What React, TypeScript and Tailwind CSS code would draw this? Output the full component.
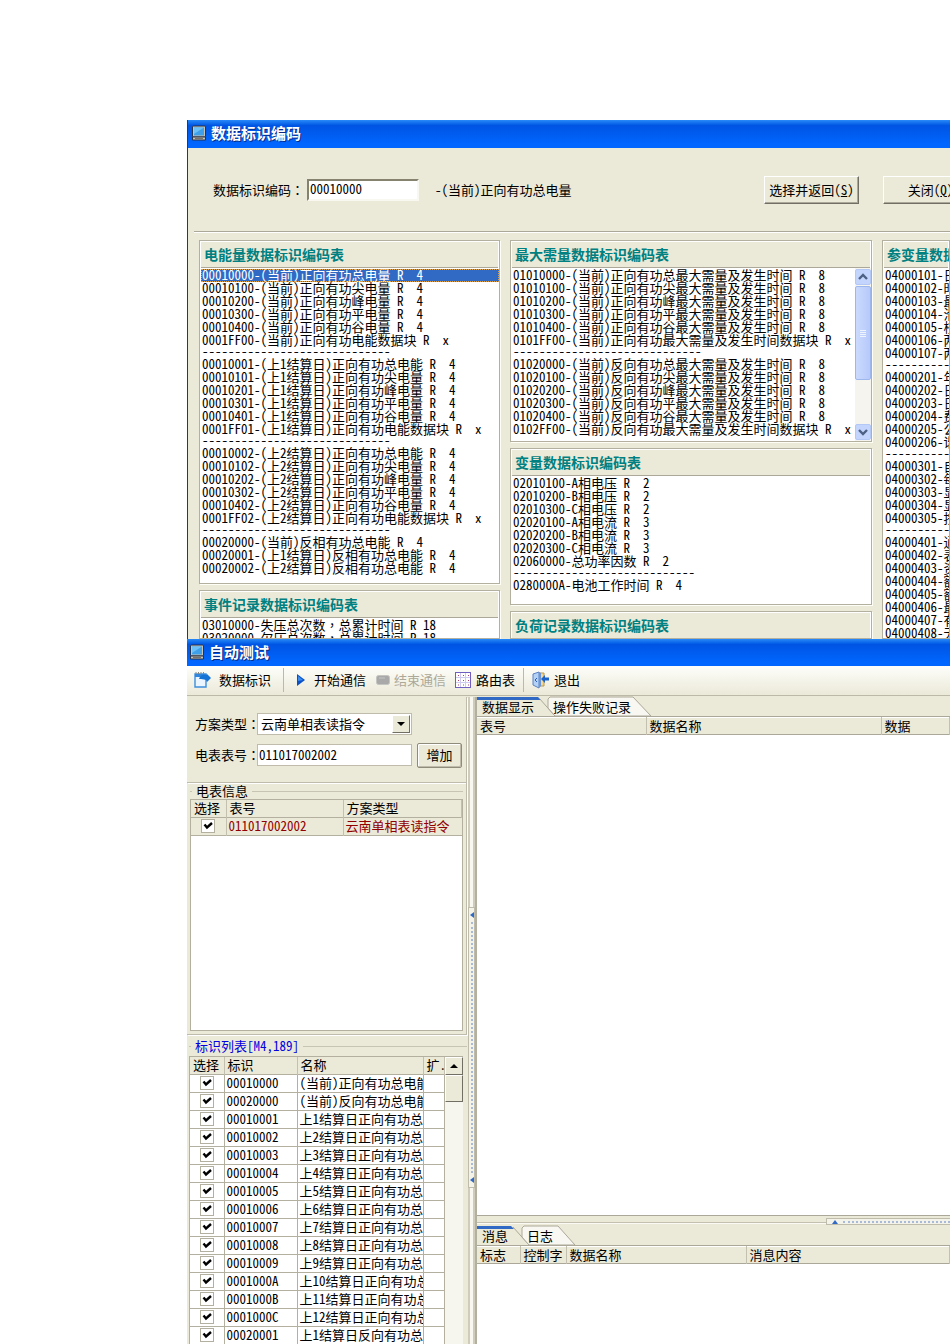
import type { ReactNode } from "react";

const energyCodes = [
  "00010000-(当前)正向有功总电量 R  4",
  "00010100-(当前)正向有功尖电量 R  4",
  "00010200-(当前)正向有功峰电量 R  4",
  "00010300-(当前)正向有功平电量 R  4",
  "00010400-(当前)正向有功谷电量 R  4",
  "0001FF00-(当前)正向有功电能数据块 R  x",
  "-----------------------------",
  "00010001-(上1结算日)正向有功总电能 R  4",
  "00010101-(上1结算日)正向有功尖电量 R  4",
  "00010201-(上1结算日)正向有功峰电量 R  4",
  "00010301-(上1结算日)正向有功平电量 R  4",
  "00010401-(上1结算日)正向有功谷电量 R  4",
  "0001FF01-(上1结算日)正向有功电能数据块 R  x",
  "-----------------------------",
  "00010002-(上2结算日)正向有功总电能 R  4",
  "00010102-(上2结算日)正向有功尖电量 R  4",
  "00010202-(上2结算日)正向有功峰电量 R  4",
  "00010302-(上2结算日)正向有功平电量 R  4",
  "00010402-(上2结算日)正向有功谷电量 R  4",
  "0001FF02-(上2结算日)正向有功电能数据块 R  x",
  "-----------------------------",
  "00020000-(当前)反相有功总电能 R  4",
  "00020001-(上1结算日)反相有功总电能 R  4",
  "00020002-(上2结算日)反相有功总电能 R  4",
];

const eventCodes = [
  "03010000-失压总次数，总累计时间 R 18",
  "03020000-欠压总次数，总累计时间 R 18",
];

const demandCodes = [
  "01010000-(当前)正向有功总最大需量及发生时间 R  8",
  "01010100-(当前)正向有功尖最大需量及发生时间 R  8",
  "01010200-(当前)正向有功峰最大需量及发生时间 R  8",
  "01010300-(当前)正向有功平最大需量及发生时间 R  8",
  "01010400-(当前)正向有功谷最大需量及发生时间 R  8",
  "0101FF00-(当前)正向有功最大需量及发生时间数据块 R  x",
  "-----------------------------",
  "01020000-(当前)反向有功总最大需量及发生时间 R  8",
  "01020100-(当前)反向有功尖最大需量及发生时间 R  8",
  "01020200-(当前)反向有功峰最大需量及发生时间 R  8",
  "01020300-(当前)反向有功平最大需量及发生时间 R  8",
  "01020400-(当前)反向有功谷最大需量及发生时间 R  8",
  "0102FF00-(当前)反向有功最大需量及发生时间数据块 R  x",
  "-----------------------------",
];

const variableCodes = [
  "02010100-A相电压 R  2",
  "02010200-B相电压 R  2",
  "02010300-C相电压 R  2",
  "02020100-A相电流 R  3",
  "02020200-B相电流 R  3",
  "02020300-C相电流 R  3",
  "02060000-总功率因数 R  2",
  "----------------------------",
  "0280000A-电池工作时间 R  4",
];

const paramCodes = [
  "04000101-日期",
  "04000102-时间",
  "04000103-最大",
  "04000104-滑差",
  "04000105-校表",
  "04000106-两套",
  "04000107-两套",
  "---------------",
  "04000201-年时",
  "04000202-日时",
  "04000203-日时",
  "04000204-费率",
  "04000205-公共",
  "04000206-谐波",
  "---------------",
  "04000301-自动",
  "04000302-每屏",
  "04000303-显示",
  "04000304-显示",
  "04000305-按键",
  "---------------",
  "04000401-通信",
  "04000402-表号",
  "04000403-资产",
  "04000404-额定",
  "04000405-额定",
  "04000406-最大",
  "04000407-有功",
  "04000408-无功",
];

const idRows = [
  ["00010000", "(当前)正向有功总电能"],
  ["00020000", "(当前)反向有功总电能"],
  ["00010001", "上1结算日正向有功总"],
  ["00010002", "上2结算日正向有功总"],
  ["00010003", "上3结算日正向有功总"],
  ["00010004", "上4结算日正向有功总"],
  ["00010005", "上5结算日正向有功总"],
  ["00010006", "上6结算日正向有功总"],
  ["00010007", "上7结算日正向有功总"],
  ["00010008", "上8结算日正向有功总"],
  ["00010009", "上9结算日正向有功总"],
  ["0001000A", "上10结算日正向有功总"],
  ["0001000B", "上11结算日正向有功总"],
  ["0001000C", "上12结算日正向有功总"],
  ["00020001", "上1结算日反向有功总"],
];

// full-width punctuation, centred in its cell
const Wide = ({ children }: { children: ReactNode }) => (
  <span lang="zh-TW" className="[font-feature-settings:normal]">
    {children}
  </span>
);

const MonitorIcon = () => (
  <svg className="h-4 w-4 shrink-0" viewBox="0 0 16 16">
    <rect x="1.500" y="1" width="13" height="11" rx="1" fill="#c8c4b4" stroke="#26334d" />
    <rect x="3" y="2.500" width="10" height="8" fill="#3f9fe8" />
    <path d="M3 2.500h10L3 9z" fill="#6cc0f8" />
    <path d="M1.500 12h13v3h-13z" fill="#c8c4b4" stroke="#26334d" />
    <path d="M4 13.500h8" stroke="#77736a" />
  </svg>
);

const TitleBar = ({ title, className }: { title: string; className: string }) => (
  <header
    className={`flex shrink-0 items-center gap-1 bg-linear-to-b from-[#2a8af8] from-0% via-[#0054e3] via-20% to-[#0066ff] to-85% pb-0.5 ${className}`}
  >
    <MonitorIcon />
    <h1 className="text-[15px] leading-5 font-bold whitespace-nowrap text-white [text-shadow:1px_1px_#0a2a80]">
      {title}
    </h1>
  </header>
);

type CodePanelProps = {
  title: string;
  codes?: string[];
  selected?: number;
  className?: string;
  children?: ReactNode;
};

const CodePanel = ({ title, codes = [], selected, className = "", children }: CodePanelProps) => (
  <section
    className={`flex flex-col overflow-hidden border border-[#b4b0a0] bg-white shadow-[1px_1px_#fffef6] ${className}`}
  >
    <h2 className="mx-px mt-px h-[26px] shrink-0 border-b border-[#aca899] bg-[#ebe9d8] pl-[3px] text-[14px] leading-6 font-bold whitespace-nowrap text-[#008080]">
      {title}
    </h2>
    <div className="flex min-h-0 flex-1">
      <ul className="min-w-0 flex-1 pt-px pl-px">
        {codes.map((code, i) => (
          <li
            key={i}
            className={`pl-px whitespace-pre ${
              code.startsWith("--") ? "h-[11px] leading-[7px]" : "h-[13px] leading-[11px]"
            } ${i === selected ? "bg-[#316ac5] text-white outline-1 -outline-offset-1 outline-dotted outline-[#d8a050]" : ""}`}
          >
            {code.split("，").map((part, j) => (
              <span key={j}>
                {j > 0 && <Wide>，</Wide>}
                {part}
              </span>
            ))}
          </li>
        ))}
      </ul>
      {children}
    </div>
  </section>
);

const ScrollArrow = ({ down = false }: { down?: boolean }) => (
  <button
    className="flex h-4 items-center justify-center rounded-xs border border-[#b4c8f6] bg-[#c4d5fd]"
    aria-label={down ? "向下滚动" : "向上滚动"}
  >
    <svg className="h-2 w-2.5" viewBox="0 0 10 8" fill="none" stroke="#4d6185" strokeWidth="2.4">
      <path d={down ? "M1 2l4 4 4-4" : "M1 6l4-4 4 4"} />
    </svg>
  </button>
);

const CodeScrollBar = () => (
  <div className="flex w-4 shrink-0 flex-col bg-[#f5f4ee] py-px">
    <ScrollArrow />
    <div className="mt-px flex h-[94px] flex-col items-center justify-center gap-px rounded-xs border border-[#9db6ec] bg-linear-to-r from-[#cbdafd] to-[#b6c9fa]">
      <i className="h-px w-1.5 bg-[#eef4fe]" />
      <i className="h-px w-1.5 bg-[#eef4fe]" />
      <i className="h-px w-1.5 bg-[#eef4fe]" />
      <i className="h-px w-1.5 bg-[#eef4fe]" />
    </div>
    <div className="flex-1" />
    <ScrollArrow down />
  </div>
);

const ClassicButton = ({ children }: { children: ReactNode }) => (
  <button className="h-7 w-[95px] shrink-0 border border-t-white border-r-[#716f64] border-b-[#716f64] border-l-white bg-[#ebe9d8] whitespace-nowrap shadow-[inset_-1px_-1px_#aca899]">
    {children}
  </button>
);

const CodeWindow = () => (
  <div className="flex h-[519px] shrink-0 flex-col overflow-hidden border-l border-[#0831d9] bg-[#ebe9d8]">
    <TitleBar title="数据标识编码" className="h-7 pl-[3px]" />
    <div className="ml-1.5 flex h-[84px] shrink-0 items-center border-b border-[#aca899] pl-[19px] shadow-[0_1px_#fff]">
      <label htmlFor="code" className="shrink-0">
        数据标识编码<Wide>：</Wide>
      </label>
      <input
        id="code"
        defaultValue="00010000"
        className="ml-[3px] h-[22px] w-28 shrink-0 border-2 border-t-[#85826f] border-r-[#f8f7f0] border-b-[#f8f7f0] border-l-[#85826f] bg-white px-px pb-0.5"
      />
      <p className="ml-4 w-[329px] shrink-0 whitespace-nowrap">-(当前)正向有功总电量</p>
      <ClassicButton>
        选择并返回(<u>S</u>)
      </ClassicButton>
      <div className="w-6 shrink-0" />
      <ClassicButton>
        关闭(<u>Q</u>)
      </ClassicButton>
    </div>
    <div className="flex min-h-0 flex-1 gap-[10px] pt-2 pl-[11px]">
      <div className="flex w-[301px] shrink-0 flex-col gap-1.5">
        <CodePanel title="电能量数据标识编码表" codes={energyCodes} selected={0} className="h-[344px] shrink-0" />
        <CodePanel title="事件记录数据标识编码表" codes={eventCodes} className="flex-1" />
      </div>
      <div className="flex w-[362px] shrink-0 flex-col gap-1.5">
        <CodePanel title="最大需量数据标识编码表" codes={demandCodes} className="h-[202px] shrink-0">
          <CodeScrollBar />
        </CodePanel>
        <CodePanel title="变量数据标识编码表" codes={variableCodes} className="h-[157px] shrink-0" />
        <CodePanel title="负荷记录数据标识编码表" className="flex-1" />
      </div>
      <CodePanel title="参变量数据标识编码表" codes={paramCodes} className="min-w-0 flex-1" />
    </div>
  </div>
);

const ToolButton = ({
  icon,
  label,
  disabled,
  className = "",
}: {
  icon: ReactNode;
  label: string;
  disabled?: boolean;
  className?: string;
}) => (
  <button
    disabled={disabled}
    className={`flex shrink-0 items-center whitespace-nowrap disabled:text-[#aca899] ${className}`}
  >
    {icon}
    {label}
  </button>
);

const Toolbar = () => (
  <nav className="flex h-[30px] shrink-0 items-center border-b border-[#bdb9a8] bg-linear-to-b from-[#fefefb] to-[#ebe9d8] pb-px pl-1.5">
    <ToolButton
      label="数据标识"
      className="gap-2"
      icon={
        <svg className="h-[18px] w-[18px]" viewBox="0 0 18 18">
          <path d="M2 3h11v13H2z" fill="#eaf5ff" stroke="#3d8fdd" strokeWidth="1.4" />
          <path d="M2 3h11v3H2z" fill="#2f86dc" />
          <path d="M3 1v2M5.500 1v2M8 1v2M10.500 1v2" stroke="#888" />
          <path d="M6 8c1-4 4-5 7-4l1-1 4 4-4 4-1-2c-3-1-4-1-7-1z" fill="#1673d6" />
        </svg>
      }
    />
    <div className="mr-3 ml-3 h-6 w-px bg-[#bdb9a8]" />
    <ToolButton
      label="开始通信"
      className="gap-2"
      icon={
        <svg className="h-3 w-2.5" viewBox="0 0 10 12">
          <path d="M1 0l8 6-8 6z" fill="#0a50c8" />
          <path d="M2 2l5 4-5 1z" fill="#3a8cf0" />
        </svg>
      }
    />
    <ToolButton
      label="结束通信"
      disabled
      className="ml-2.5 gap-1"
      icon={
        <svg className="h-3 w-3.5" viewBox="0 0 14 12">
          <rect x="0.500" y="1.500" width="13" height="9" rx="2" fill="#a9a9a9" stroke="#c4c4c0" />
          <path d="M3 4h6" stroke="#c6c6c6" />
        </svg>
      }
    />
    <ToolButton
      label="路由表"
      className="ml-2 gap-1"
      icon={
        <svg className="h-[18px] w-[18px]" viewBox="0 0 18 18">
          <rect x="1.500" y="1.500" width="15" height="15" fill="#fff" stroke="#6f5fc0" />
          <path d="M6.500 2v14M11.500 2v14M2 6.500h14M2 11.500h14" stroke="#cfcaf0" />
          <path d="M4 4.500h1M9 4.500h1M14 4.500h1M4 9.500h1M9 9.500h1M14 9.500h1M4 14h1M9 14h1M14 14h1" stroke="#b04070" />
        </svg>
      }
    />
    <div className="mr-2 ml-2 h-6 w-px bg-[#bdb9a8]" />
    <ToolButton
      label="退出"
      className="gap-1"
      icon={
        <svg className="h-[18px] w-[18px]" viewBox="0 0 18 18">
          <path d="M6 2h6v13H6z" fill="#f4d890" stroke="#b99a50" />
          <path d="M1 3l6-2v16l-6-3z" fill="#b4d2f6" stroke="#5b82c4" />
          <path d="M7 1l2 1v13l-2 2z" fill="#6f96d4" />
          <path d="M5 7L3 9l2 2" fill="none" stroke="#2c60b8" />
          <path d="M9 8L13 4v2.500h4v3h-4V12z" fill="#1c62c8" />
        </svg>
      }
    />
  </nav>
);

const CheckBox = ({ label }: { label: string }) => (
  <span className="relative mx-auto block h-3.5 w-3.5">
    <input
      type="checkbox"
      defaultChecked
      aria-label={label}
      className="peer block h-3.5 w-3.5 appearance-none border border-[#b4b0a0] bg-white"
    />
    <svg
      className="pointer-events-none absolute inset-0 hidden h-3.5 w-3.5 peer-checked:block"
      viewBox="0 0 14 14"
      fill="none"
      stroke="#000"
      strokeWidth="2.4"
    >
      <path d="M3.500 5.500l2.500 3 5-4.500" />
    </svg>
  </span>
);

const headCell =
  "h-[17px] border-r border-[#c4c0b0] bg-[#ebe9d8] pl-[3px] pr-0 py-0 text-left font-normal whitespace-nowrap overflow-hidden leading-4 align-top";

const TestForm = () => (
  <form className="flex h-[86px] shrink-0 flex-col gap-[9px] border-r border-b border-[#c0bcac] pt-4 pl-2 shadow-[1px_1px_#fff]">
    <div className="flex items-center">
      <label htmlFor="scheme" className="w-[62px] shrink-0 whitespace-nowrap">
        方案类型<Wide>：</Wide>
      </label>
      <div className="relative">
        <select
          id="scheme"
          className="block h-[22px] w-[155px] appearance-none border border-[#c0bcac] bg-white pl-[3px] leading-5"
        >
          <option>云南单相表读指令</option>
        </select>
        <span className="pointer-events-none absolute top-0.5 right-0.5 flex h-[18px] w-[18px] items-center justify-center border border-t-white border-r-[#716f64] border-b-[#716f64] border-l-white bg-[#ebe9d8]">
          <svg className="h-1 w-2" viewBox="0 0 8 4">
            <path d="M0 0h8L4 4z" />
          </svg>
        </span>
      </div>
    </div>
    <div className="flex h-[22px] items-center">
      <label htmlFor="meter" className="w-[62px] shrink-0 whitespace-nowrap">
        电表表号<Wide>：</Wide>
      </label>
      <input
        id="meter"
        defaultValue="011017002002"
        className="h-[22px] w-[155px] border border-[#c0bcac] bg-white px-px pb-0.5"
      />
      <button
        type="button"
        className="ml-[5px] h-[25px] w-[45px] rounded-xs border border-[#8f8c7c] bg-[#ebe9d8] shadow-[inset_-1px_-1px_#c0bcac,inset_1px_1px_#fff]"
      >
        增加
      </button>
    </div>
  </form>
);

const GroupTitle = ({ id, className, children }: { id: string; className: string; children: ReactNode }) => (
  <h2 id={id} className={`flex shrink-0 items-center gap-1 whitespace-nowrap ${className}`}>
    <i className="h-px w-0.5 bg-[#c8c4b4]" />
    {children}
    <i className="h-px flex-1 bg-[#c8c4b4]" />
  </h2>
);

const MeterInfo = () => (
  <section
    aria-labelledby="meter-info"
    className="flex h-[252px] shrink-0 flex-col border-r border-b border-[#c0bcac] px-[3px] pb-[3px] shadow-[1px_1px_#fff]"
  >
    <GroupTitle id="meter-info" className="h-4">
      电表信息
    </GroupTitle>
    <div className="min-h-0 flex-1 border border-[#b4b0a0] bg-white">
      <table className="w-full table-fixed border-collapse">
        <thead>
          <tr className="border-b border-[#b4b0a0]">
            <th className={`${headCell} w-[35px]`}>选择</th>
            <th className={`${headCell} w-[117px]`}>表号</th>
            <th className={headCell}>方案类型</th>
          </tr>
        </thead>
        <tbody>
          <tr className="h-[18px] border-b border-[#b4b0a0] bg-[#ebe9d8] leading-4 whitespace-nowrap text-[#900000]">
            <td className="border-r border-[#c4c0b0] p-0">
              <CheckBox label="011017002002" />
            </td>
            <td className="border-r border-[#c4c0b0] px-0.5 py-0 align-top">011017002002</td>
            <td className="px-0.5 py-0 align-top">云南单相表读指令</td>
          </tr>
        </tbody>
      </table>
    </div>
  </section>
);

const IdList = () => (
  <section aria-labelledby="id-list" className="mt-px flex min-h-0 flex-1 flex-col pl-0.5">
    <GroupTitle id="id-list" className="h-5 text-[#0000e0]">
      标识列表[M4,189]
    </GroupTitle>
    <div className="mr-1 flex min-h-0 flex-1 overflow-hidden border-t border-l border-[#b4b0a0]">
      <div className="min-w-0 flex-1">
        <table className="w-full table-fixed border-collapse bg-white">
          <thead>
            <tr className="border-b border-[#b4b0a0]">
              <th className={`${headCell} w-[34px]`}>选择</th>
              <th className={`${headCell} w-[73px]`}>标识</th>
              <th className={`${headCell} w-[126px]`}>名称</th>
              <th className={headCell}>扩.</th>
            </tr>
          </thead>
          <tbody>
            {idRows.map(([id, name]) => (
              <tr key={id} className="h-[18px] border-b border-[#b4b0a0] leading-4 whitespace-nowrap">
                <td className="border-r border-[#b4b0a0] p-0">
                  <CheckBox label={id} />
                </td>
                <td className="border-r border-[#b4b0a0] px-0.5 py-0 align-top">{id}</td>
                <td className="overflow-hidden border-r border-[#b4b0a0] px-0.5 py-0 align-top">{name}</td>
                <td className="border-r border-[#b4b0a0] p-0" />
              </tr>
            ))}
          </tbody>
        </table>
      </div>
      <div className="flex w-[18px] shrink-0 flex-col bg-[#f6f5ee]">
        <button
          aria-label="向上滚动"
          className="flex h-[18px] shrink-0 items-center justify-center border border-t-white border-r-[#716f64] border-b-[#716f64] border-l-white bg-[#ebe9d8]"
        >
          <svg className="h-1 w-2" viewBox="0 0 8 4">
            <path d="M0 4h8L4 0z" />
          </svg>
        </button>
        <div className="h-[27px] shrink-0 border border-t-white border-r-[#716f64] border-b-[#716f64] border-l-white bg-[#ebe9d8]" />
      </div>
    </div>
  </section>
);

const SideSplitter = () => (
  <div className="flex w-[10px] shrink-0 flex-col border-r-2 border-[#b4b0a0] pl-px">
    <div className="h-[210px] shrink-0 border-x-2 border-[#d0ccbc] bg-[#f8f7f0]" />
    <div className="flex h-[281px] shrink-0 flex-col items-center justify-between border border-[#c0bcac] bg-[#f4f3ea] py-1">
      <svg className="h-1.5 w-1 shrink-0" viewBox="0 0 4 6">
        <path d="M4 0v6L0 3z" fill="#316ac5" />
      </svg>
      <div className="my-1 w-0 flex-1 border-l-2 border-dotted border-[#a9bad8]" />
      <svg className="h-1.5 w-1 shrink-0" viewBox="0 0 4 6">
        <path d="M4 0v6L0 3z" fill="#316ac5" />
      </svg>
    </div>
    <div className="flex-1 border-x-2 border-[#d0ccbc] bg-[#f8f7f0]" />
  </div>
);

type TabsProps = { active: string; other: string; wide?: boolean };

const Tabs = ({ active, other, wide }: TabsProps) => (
  <div role="tablist" className="flex h-5 shrink-0 border-b border-[#aca899] bg-[#ebe9d8]">
    <button role="tab" aria-selected="true" className={`relative h-[19px] ${wide ? "w-[70px]" : "w-11"}`}>
      <svg
        className="absolute inset-0 h-[19px] w-full overflow-visible"
        viewBox={wide ? "0 0 70 19" : "0 0 44 19"}
        fill="none"
      >
        {wide ? (
          <>
            <path d="M0 0h61l3 3H0z" fill="#316ac5" />
            <path d="M62 1l16 18" stroke="#aca899" />
          </>
        ) : (
          <>
            <path d="M0 0h34l3 3H0z" fill="#316ac5" />
            <path d="M36 1l16 18" stroke="#aca899" />
          </>
        )}
      </svg>
      <span className="relative block pl-[5px] text-left leading-[19px] whitespace-nowrap">{active}</span>
    </button>
    <button role="tab" aria-selected="false" className={`relative h-[19px] ${wide ? "w-[104px]" : "w-[54px]"}`}>
      <svg
        className="absolute inset-0 h-[19px] w-full overflow-visible"
        viewBox={wide ? "0 0 104 19" : "0 0 54 19"}
      >
        <path
          d={wide ? "M1 11V2l2-2h83l18 19H8z" : "M1 11V2l2-2h34l17 19H8z"}
          fill="#f8f7f1"
          stroke="#aca899"
        />
      </svg>
      <span className="relative block pl-1.5 text-left leading-[19px] whitespace-nowrap">{other}</span>
    </button>
  </div>
);

const resultCell = `${headCell} border-t border-t-white`;

const ResultArea = () => (
  <main className="flex min-w-0 flex-1 flex-col bg-white">
    <Tabs active="数据显示" other="操作失败记录" wide />
    <table className="w-full table-fixed border-collapse">
      <thead>
        <tr className="border-b border-[#aca899]">
          <th className={`${resultCell} w-[169px]`}>表号</th>
          <th className={`${resultCell} w-[235px]`}>数据名称</th>
          <th className={resultCell}>数据</th>
        </tr>
      </thead>
    </table>
    <div className="min-h-0 flex-1" />
    <div className="flex h-[11px] shrink-0 justify-end border-t border-[#aca899] bg-[#ebe9d8] pt-0.5">
      <div className="my-1 h-0.5 flex-1 border-t border-[#c4c0b0] bg-[#fbfaf4]" />
      <div className="flex h-[7px] w-[124px] items-center gap-1 border border-r-0 border-[#c0bcac] bg-[#f4f3ea] pl-1">
        <svg className="h-1 w-2" viewBox="0 0 8 4">
          <path d="M1 4h6L4 0z" fill="#316ac5" />
        </svg>
        <div className="flex-1 border-t-2 border-dotted border-[#a9bad8]" />
      </div>
    </div>
    <Tabs active="消息" other="日志" />
    <table className="w-full table-fixed border-collapse">
      <thead>
        <tr className="border-b border-[#aca899]">
          <th className={`${resultCell} w-[43px]`}>标志</th>
          <th className={`${resultCell} w-[46px]`}>控制字</th>
          <th className={`${resultCell} w-[180px]`}>数据名称</th>
          <th className={resultCell}>消息内容</th>
        </tr>
      </thead>
    </table>
    <div className="h-20 shrink-0" />
  </main>
);

const TestWindow = () => (
  <div className="flex min-h-0 flex-1 flex-col overflow-hidden bg-[#ebe9d8]">
    <TitleBar title="自动测试" className="h-[27px] pl-0.5" />
    <Toolbar />
    <div className="mt-px flex min-h-0 flex-1">
      <aside className="flex w-[280px] shrink-0 flex-col">
        <TestForm />
        <MeterInfo />
        <IdList />
      </aside>
      <SideSplitter />
      <ResultArea />
    </div>
  </div>
);

const App = () => (
  <div className="flex h-screen flex-col overflow-hidden bg-white pt-[120px] pl-[187px] font-['Noto_Sans_CJK_SC',sans-serif] text-[13px] leading-4 text-black [font-feature-settings:'hwid']">
    <CodeWindow />
    <TestWindow />
  </div>
);

export default App;
